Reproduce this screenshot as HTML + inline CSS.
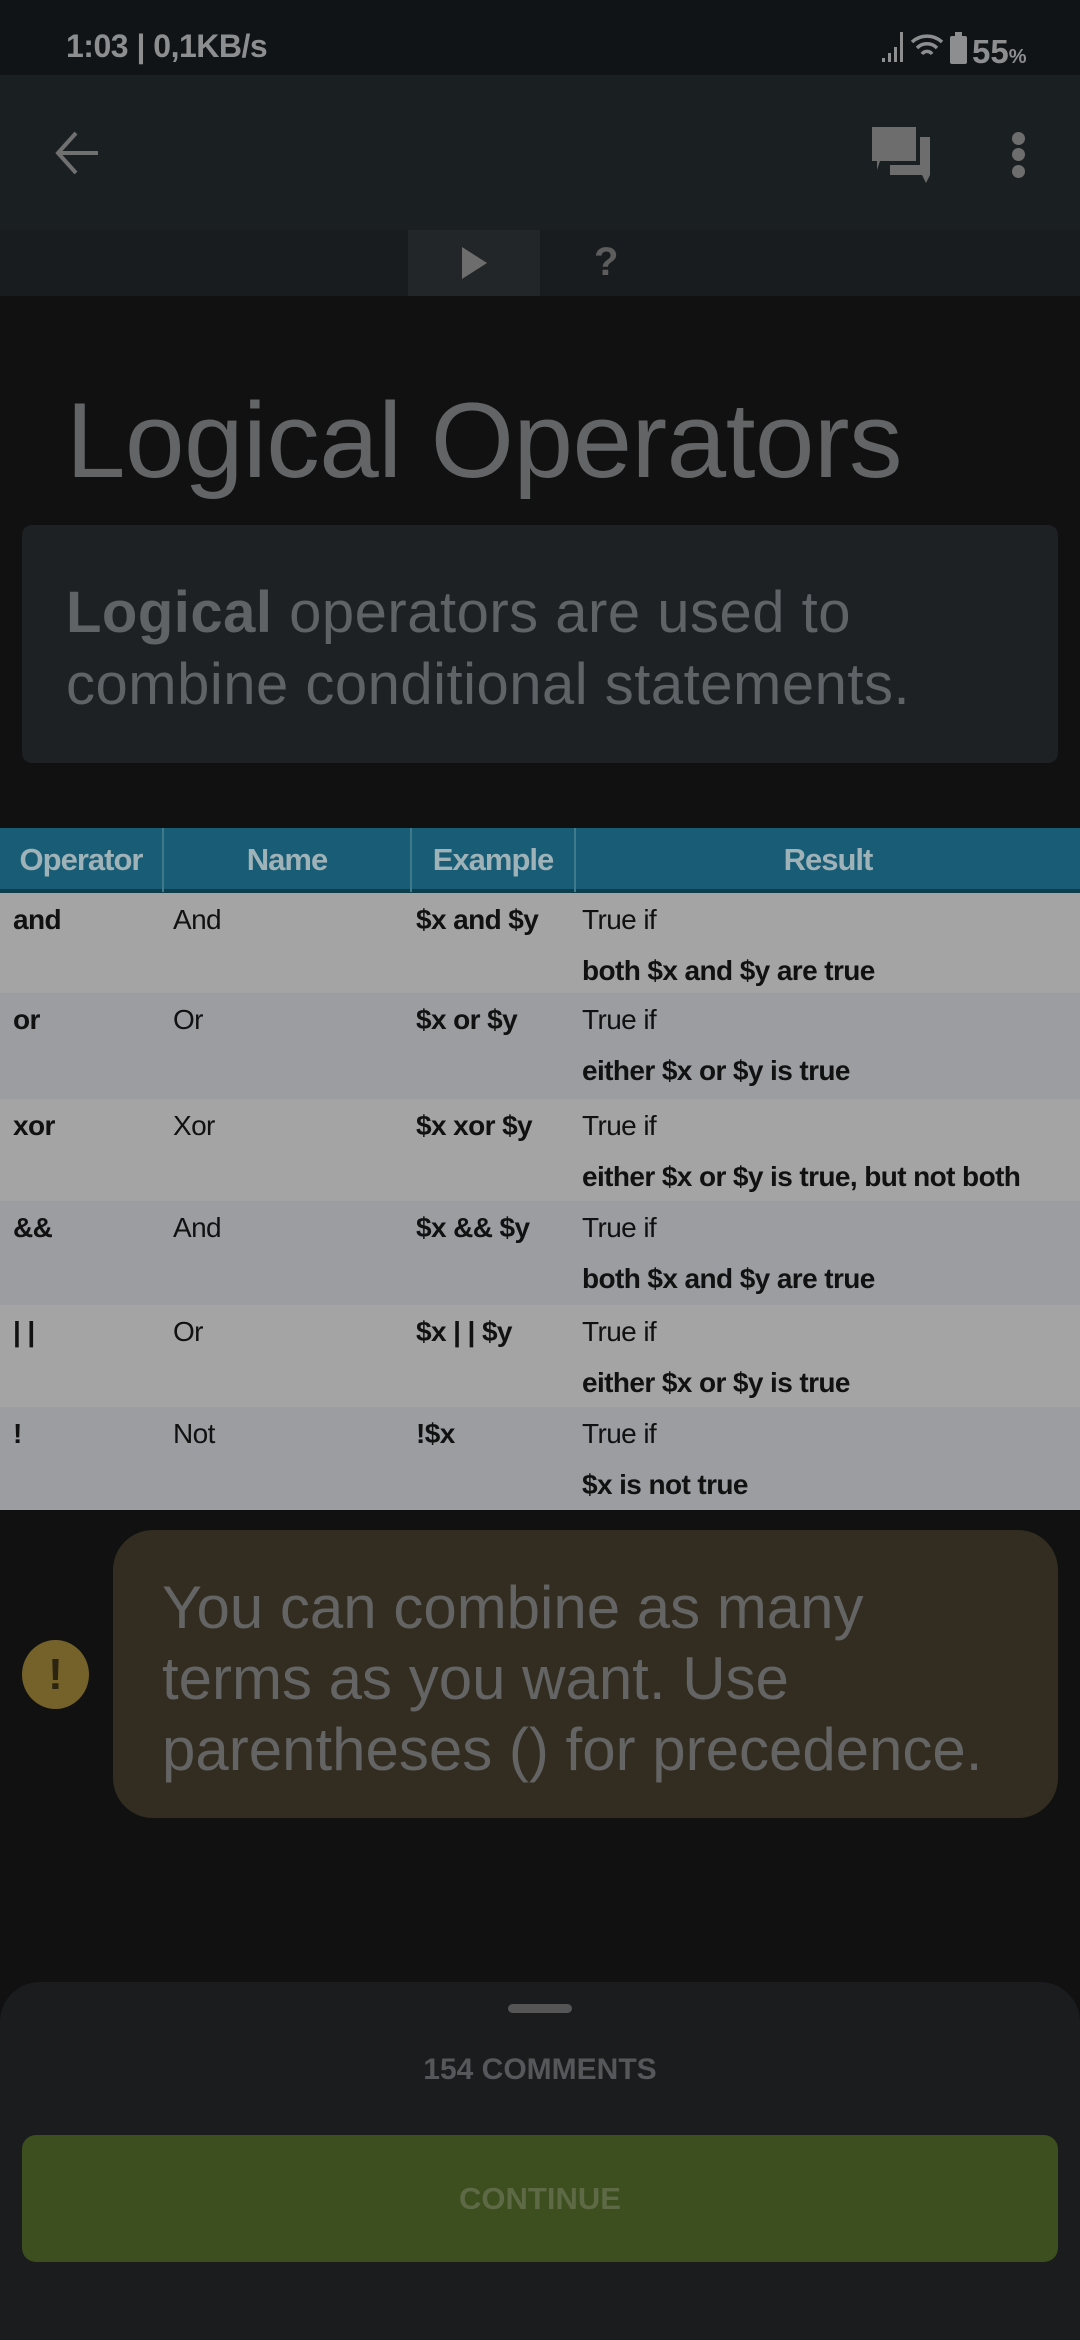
<!DOCTYPE html>
<html><head><meta charset="utf-8"><style>
*{margin:0;padding:0;box-sizing:border-box}
body{width:1080px;height:2340px;background:#111;font-family:"Liberation Sans",sans-serif;position:relative;overflow:hidden}
.a{position:absolute}
.r{position:absolute;left:0;width:1080px}
.c{position:absolute;top:1px;font-size:28px;line-height:51px;color:#111;letter-spacing:-0.6px;white-space:nowrap}
.h{position:absolute;top:0;height:64px;line-height:64px;font-size:31px;color:#9fb2b8;font-weight:bold;text-align:center;letter-spacing:-1px;border-right:2px solid #3f7a8c}
.o{background:#a4a4a4}.e{background:#9b9da1}
b{font-weight:bold}
</style></head><body>
<div class="a" style="left:0;top:0;width:1080px;height:75px;background:#111417"></div>
<div class="a" style="left:66px;top:28px;font-size:32px;color:#8c8e90;font-weight:bold;letter-spacing:-0.5px">1:03 | 0,1KB/s</div>
<svg class="a" style="left:880px;top:30px" width="180" height="36" viewBox="0 0 180 36"><path d="M2 32h3v-4H2zM8 32h3v-9H8zM14 32h3v-15h-3zM20 32h3V2h-3z" fill="#8c8e90"/><path d="M32 12a22 22 0 0 1 30 0M37 18a14 14 0 0 1 20 0M42 24a6 6 0 0 1 10 0" stroke="#8c8e90" stroke-width="3.5" fill="none"/><rect x="70" y="6" width="17" height="28" rx="2" fill="#8c8e90"/><rect x="75" y="2" width="7" height="5" fill="#8c8e90"/><text x="92" y="33" font-family="Liberation Sans" font-weight="bold" font-size="33" fill="#8c8e90">55<tspan font-size="20">%</tspan></text></svg>
<div class="a" style="left:0;top:75px;width:1080px;height:155px;background:#1a1f22"></div>
<svg class="a" style="left:50px;top:125px" width="56" height="56" viewBox="0 0 56 56"><path d="M48 28H10M26 8L8 28l18 20" stroke="#707070" stroke-width="4" fill="none"/></svg>
<svg class="a" style="left:870px;top:125px" width="64" height="60" viewBox="0 0 64 60"><path d="M2 2h44v34H10l-3 9V36H2z" fill="#6d6d6d"/><path d="M50 12h10v38l-4 8-4-8H20V40h30z" fill="#6d6d6d"/></svg>
<div class="a" style="left:1012px;top:132px;width:13px;height:13px;border-radius:50%;background:#6d6d6d;box-shadow:0 16px #6d6d6d,0 33px #6d6d6d"></div>
<div class="a" style="left:0;top:230px;width:1080px;height:66px;background:#191c1f"></div>
<div class="a" style="left:408px;top:230px;width:132px;height:66px;background:#222629"></div>
<div class="a" style="left:462px;top:247px;border-left:25px solid #6d6d6d;border-top:16px solid transparent;border-bottom:16px solid transparent"></div>
<div class="a" style="left:594px;top:240px;font-size:40px;color:#5d5d5d;font-weight:bold">?</div>
<div class="a" style="left:66px;top:378px;font-size:107px;color:#626466;letter-spacing:-0.5px">Logical Operators</div>
<div class="a" style="left:22px;top:525px;width:1036px;height:238px;background:#1e2124;border-radius:10px"></div>
<div class="a" style="left:66px;top:577px;font-size:58px;line-height:72px;color:#5f6366;letter-spacing:0.5px"><b>Logical</b> operators are used to<br>combine conditional statements.</div>

<div class="r" style="top:828px;height:65px;background:#185d75;border-bottom:4px solid #0e3d4c">
<div class="h" style="left:0;width:164px">Operator</div><div class="h" style="left:164px;width:248px">Name</div><div class="h" style="left:412px;width:164px">Example</div><div class="h" style="left:576px;width:504px;border-right:0">Result</div></div>

<div class="r o" style="top:893px;height:100px"><div class="c" style="left:13px"><b>and</b></div><div class="c" style="left:173px">And</div><div class="c" style="left:416px"><b>$x and $y</b></div><div class="c" style="left:582px">True if<br><b>both $x and $y are true</b></div></div>
<div class="r e" style="top:993px;height:106px"><div class="c" style="left:13px"><b>or</b></div><div class="c" style="left:173px">Or</div><div class="c" style="left:416px"><b>$x or $y</b></div><div class="c" style="left:582px">True if<br><b>either $x or $y is true</b></div></div>
<div class="r o" style="top:1099px;height:102px"><div class="c" style="left:13px"><b>xor</b></div><div class="c" style="left:173px">Xor</div><div class="c" style="left:416px"><b>$x xor $y</b></div><div class="c" style="left:582px">True if<br><b>either $x or $y is true, but not both</b></div></div>
<div class="r e" style="top:1201px;height:104px"><div class="c" style="left:13px"><b>&amp;&amp;</b></div><div class="c" style="left:173px">And</div><div class="c" style="left:416px"><b>$x &amp;&amp; $y</b></div><div class="c" style="left:582px">True if<br><b>both $x and $y are true</b></div></div>
<div class="r o" style="top:1305px;height:102px"><div class="c" style="left:13px"><b>| |</b></div><div class="c" style="left:173px">Or</div><div class="c" style="left:416px"><b>$x | | $y</b></div><div class="c" style="left:582px">True if<br><b>either $x or $y is true</b></div></div>
<div class="r e" style="top:1407px;height:103px"><div class="c" style="left:13px"><b>!</b></div><div class="c" style="left:173px">Not</div><div class="c" style="left:416px"><b>!$x</b></div><div class="c" style="left:582px">True if<br><b>$x is not true</b></div></div>

<div class="a" style="left:22px;top:1640px;width:67px;height:69px;border-radius:50%;background:#75622a;color:#2a2410;font-size:44px;font-weight:bold;text-align:center;line-height:69px">!</div>
<div class="a" style="left:113px;top:1530px;width:945px;height:288px;background:#322d20;border-radius:40px"></div>
<div class="a" style="left:162px;top:1572px;font-size:60px;line-height:71px;color:#646464;letter-spacing:0px">You can combine as many<br>terms as you want. Use<br>parentheses () for precedence.</div>
<div class="a" style="left:0;top:1982px;width:1080px;height:358px;background:#1a1c1e;border-radius:40px 40px 0 0"></div>
<div class="a" style="left:508px;top:2004px;width:64px;height:9px;border-radius:5px;background:#555"></div>
<div class="a" style="left:0;top:2053px;width:1080px;text-align:center;font-size:30px;font-weight:bold;color:#55575a">154 COMMENTS</div>
<div class="a" style="left:22px;top:2135px;width:1036px;height:127px;background:#3d4e1f;border-radius:14px;text-align:center;line-height:127px;font-size:31px;font-weight:bold;color:#5d6a45">CONTINUE</div>
</body></html>
